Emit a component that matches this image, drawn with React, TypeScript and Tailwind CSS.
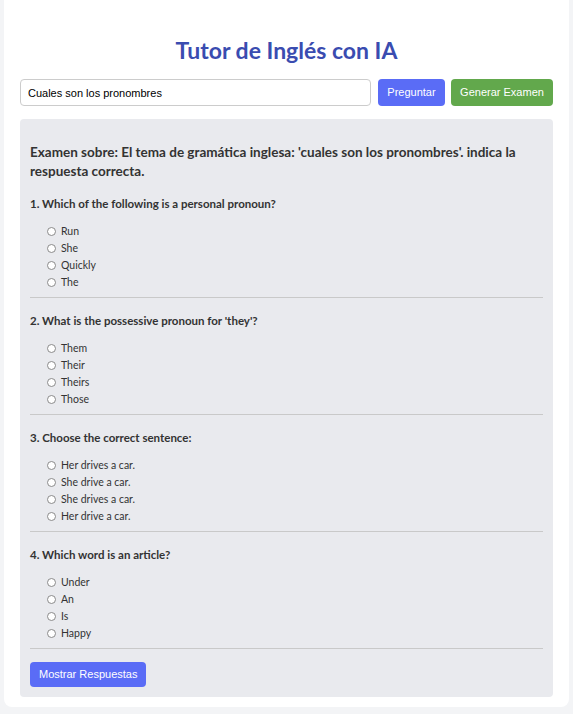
import { useState } from 'react';

type Question = {
    text: string;
    options: string[];
};

const questions: Question[] = [
    { text: '1. Which of the following is a personal pronoun?', options: ['Run', 'She', 'Quickly', 'The'] },
    { text: "2. What is the possessive pronoun for 'they'?", options: ['Them', 'Their', 'Theirs', 'Those'] },
    { text: '3. Choose the correct sentence:', options: ['Her drives a car.', 'She drive a car.', 'She drives a car.', 'Her drive a car.'] },
    { text: '4. Which word is an article?', options: ['Under', 'An', 'Is', 'Happy'] },
];

const ui = { fontFamily: 'Lato, "Open Sans", sans-serif' };
const arial = { fontFamily: '"Liberation Sans", Arial, sans-serif' };

export default function App() {
    const [query, setQuery] = useState('Cuales son los pronombres');
    const [picked, setPicked] = useState<Record<number, number>>({});

    return (
        <div className="min-h-[714px] bg-[#f3f4f6] px-[4px] pb-[7px]" style={ui}>
            <div className="bg-white rounded-b-[8px] px-[16px] pt-[36px] pb-[10px]">
                <h1 className="text-center text-[23px] leading-[28px] font-bold text-[#3a4cb0]">
                    Tutor de Inglés con IA
                </h1>

                <div className="flex items-center gap-[6px] mt-[15px]">
                    <input
                        value={query}
                        onChange={e => setQuery(e.target.value)}
                        className="flex-1 h-[27px] border border-[#cccccc] rounded-[4px] px-[7px] text-[11px] text-black outline-none"
                        style={arial}
                    />
                    <button className="h-[27px] w-[67px] ml-[1px] rounded-[4px] bg-[#5a6cf6] text-white text-[11px]" style={arial}>
                        Preguntar
                    </button>
                    <button className="h-[27px] w-[102px] rounded-[4px] bg-[#62a84c] text-white text-[11px]" style={arial}>
                        Generar Examen
                    </button>
                </div>

                <div className="mt-[13px] bg-[#e9eaee] rounded-[4px] px-[10px] pt-[24px] pb-[10px]">
                    <p className="text-[13.5px] leading-[19px] font-bold text-[#333333]">
                        Examen sobre: El tema de gramática inglesa: 'cuales son los pronombres'. indica la respuesta correcta.
                    </p>

                    {questions.map((q, qi) => (
                        <div key={qi} className="border-b border-[#c9c9c9]">
                            <p className={`${qi === 0 ? 'mt-[15px]' : 'mt-[15px]'} text-[11.5px] leading-[16px] font-bold text-[#333333]`}>
                                {q.text}
                            </p>
                            <div className="mt-[11px] pl-[17px] pb-[6px]">
                                {q.options.map((opt, oi) => (
                                    <label
                                        key={oi}
                                        onClick={() => setPicked({ ...picked, [qi]: oi })}
                                        className="flex items-center gap-[5px] h-[17px] text-[10.5px] text-[#333333] cursor-pointer"
                                    >
                                        <span className="w-[9px] h-[9px] rounded-full border border-[#8a8a8a] bg-white flex items-center justify-center shrink-0">
                                            {picked[qi] === oi && <span className="w-[5px] h-[5px] rounded-full bg-[#3a6cf6]" />}
                                        </span>
                                        {opt}
                                    </label>
                                ))}
                            </div>
                        </div>
                    ))}

                    <button className="mt-[13px] h-[25px] px-[9px] rounded-[4px] bg-[#5a6cf6] text-white text-[11px]" style={arial}>
                        Mostrar Respuestas
                    </button>
                </div>
            </div>
        </div>
    );
}
